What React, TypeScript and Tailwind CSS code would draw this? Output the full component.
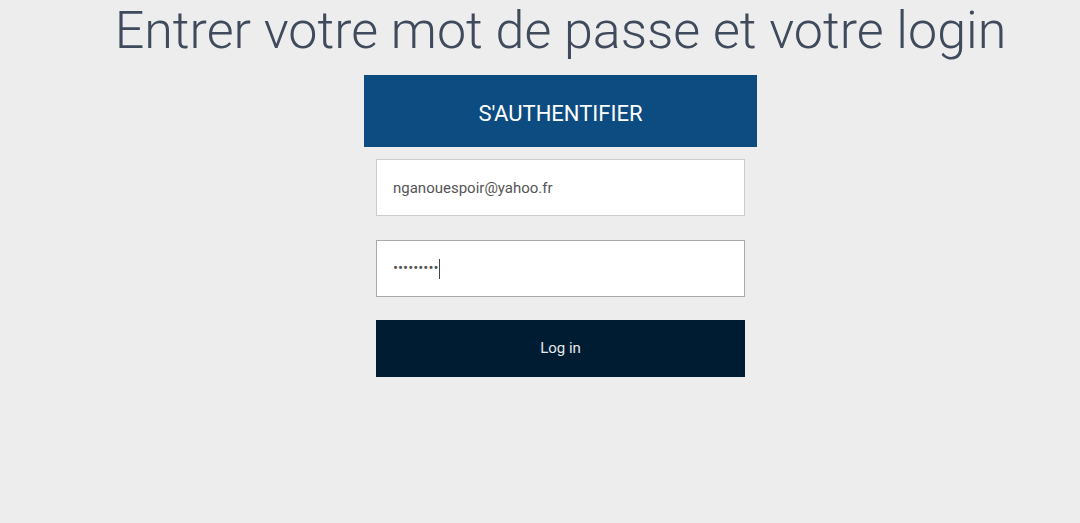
export default function App() {
  return (
    <div className="h-[523px] w-full overflow-hidden bg-[#ededed] font-['Roboto','Liberation_Sans',sans-serif]">
      <div className="flex flex-col items-center pl-[41px]">
        <h1 className="text-[52px] font-light leading-[62px] text-[#3f4a5c] whitespace-nowrap">
          Entrer votre mot de passe et votre login
        </h1>
        <div className="mt-[13px] flex w-[393px] flex-col items-center">
          <div className="flex h-[72px] w-full items-center justify-center bg-[#0c4c80] pt-1 text-[22px] text-white">
            S'AUTHENTIFIER
          </div>
          <input
            type="text"
            readOnly
            value="nganouespoir@yahoo.fr"
            className="mt-3 h-[57px] w-[369px] border border-[#cccccc] bg-white pl-4 text-[15px] text-[#555555] outline-none"
          />
          <div className="mt-6 flex h-[57px] w-[369px] items-center border border-[#a9a9a9] bg-white pl-4 text-[15px] text-[#555555]">
            <span>•••••••••</span>
            <span className="h-[20px] w-px bg-[#444]" />
          </div>
          <button className="mt-[23px] flex h-[57px] w-[369px] items-center justify-center bg-[#001c33] text-[15px] text-[#e6e9ec]">
            Log in
          </button>
        </div>
      </div>
    </div>
  )
}
